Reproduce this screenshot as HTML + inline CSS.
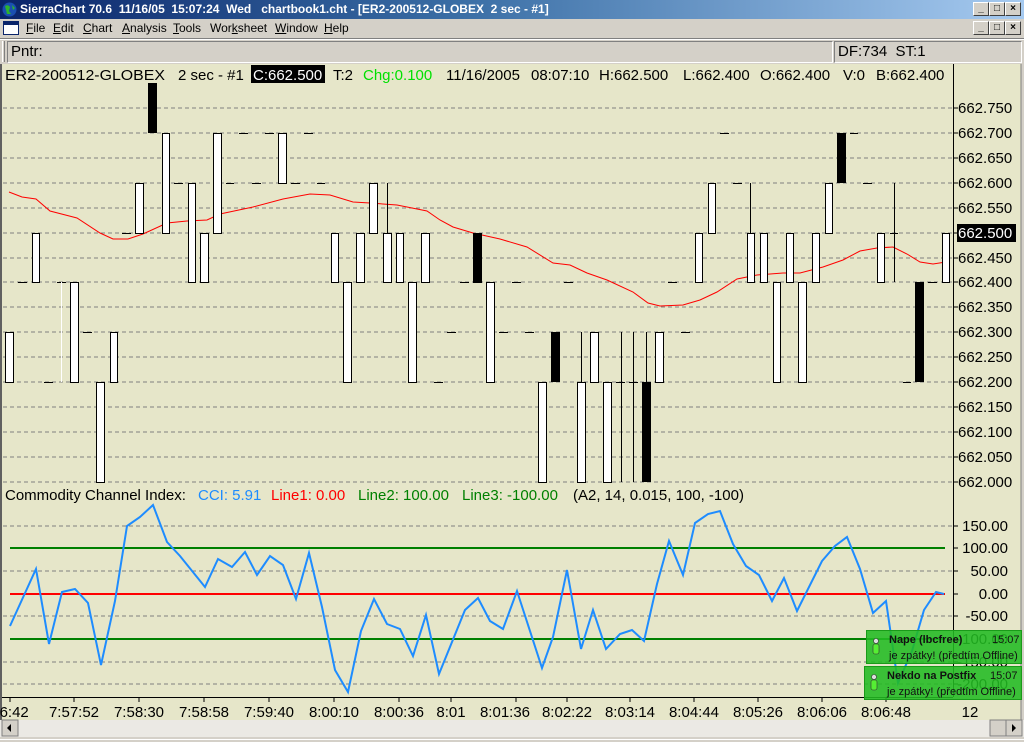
<!DOCTYPE html>
<html><head><meta charset="utf-8"><style>
*{margin:0;padding:0;box-sizing:border-box}
body{width:1024px;height:742px;overflow:hidden;background:#d4d0c8;font-family:"Liberation Sans",sans-serif;position:relative}
.abs{position:absolute}
.title{left:0;top:0;width:1024px;height:19px;background:linear-gradient(90deg,#0a246a 0%,#3a6ea5 45%,#a6caf0 100%);color:#fff;font:bold 12px "Liberation Sans",sans-serif;line-height:19px;padding-left:20px;white-space:pre}
.btn{width:16px;height:14px;background:#d4d0c8;border:1px solid;border-color:#fff #404040 #404040 #fff;font:bold 10px "Liberation Sans",sans-serif;text-align:center;line-height:12px;color:#000}
.menu{left:0;top:19px;width:1024px;height:19px;font-size:12px;line-height:18px}
.menu span{position:absolute;top:0}
.box{border:1px solid;border-color:#808080 #fff #fff #808080;font-size:15px;line-height:20px;padding-left:3px;color:#000}
svg text{white-space:pre}
</style></head><body>
<div class="abs title">SierraChart 70.6  11/16/05  15:07:24  Wed   chartbook1.cht - [ER2-200512-GLOBEX  2 sec - #1]</div>
<svg class="abs" style="left:2px;top:2px" width="15" height="15"><circle cx="7.5" cy="7.5" r="7" fill="#1a4fb0"/><path d="M3 4 Q6 2 8 5 L7 9 L9 12 L5 12 L4 8Z M10 3 L13 6 L11 8Z" fill="#2db32d"/></svg>
<div class="abs btn" style="left:973px;top:2px">_</div><div class="abs btn" style="left:989px;top:2px">&#9633;</div><div class="abs btn" style="left:1005px;top:2px">×</div>
<div class="abs menu"><svg style="position:absolute;left:3px;top:2px" width="16" height="14"><rect x="0.5" y="0.5" width="15" height="13" fill="#fff" stroke="#0a246a"/><rect x="1" y="1" width="14" height="3" fill="#0a246a"/></svg>
<span style="left:26px"><u>F</u>ile</span><span style="left:53px"><u>E</u>dit</span><span style="left:83px"><u>C</u>hart</span><span style="left:122px"><u>A</u>nalysis</span><span style="left:173px"><u>T</u>ools</span><span style="left:210px">Wor<u>k</u>sheet</span><span style="left:275px"><u>W</u>indow</span><span style="left:324px"><u>H</u>elp</span></div>
<div class="abs btn" style="left:973px;top:21px">_</div><div class="abs btn" style="left:989px;top:21px">&#9633;</div><div class="abs btn" style="left:1005px;top:21px">×</div>
<div class="abs" style="left:0;top:38px;width:1024px;height:1px;background:#808080"></div>
<div class="abs" style="left:0;top:39px;width:1024px;height:1px;background:#fff"></div>
<div class="abs" style="left:2px;top:41px;width:3px;height:21px;border-left:1px solid #fff;border-right:1px solid #808080"></div>
<div class="abs box" style="left:7px;top:41px;width:826px;height:22px">Pntr:</div>
<div class="abs box" style="left:834px;top:41px;width:188px;height:22px">DF:734&nbsp; ST:1</div>
<svg class="abs" style="left:0;top:64px" width="1024" height="678" viewBox="0 64 1024 678" font-family="Liberation Sans, sans-serif">
<rect x="0" y="64" width="1024" height="656" fill="#e6e6c9"/>
<rect x="0" y="64" width="2" height="656" fill="#606060"/>
<rect x="1021" y="64" width="3" height="656" fill="#d4d0c8"/>
<line x1="1021" y1="64" x2="1021" y2="720" stroke="#808080"/>
<g stroke="#808080" stroke-dasharray="4,3">
<path d="M3 108H953M3 133H953M3 158H953M3 183H953M3 208H953M3 233H953M3 258H953M3 282H953M3 307H953M3 332H953M3 357H953M3 382H953M3 407H953M3 432H953M3 457H953M3 482H953"/>
<path d="M3 526H953M3 571H953M3 616H953M3 662H953M3 684H953"/>
</g>
<line x1="953.5" y1="64" x2="953.5" y2="697" stroke="#000"/>
<line x1="2" y1="697.5" x2="953" y2="697.5" stroke="#000"/>
<g stroke="#000" stroke-width="1">
<path d="M953 108h5M953 133h5M953 158h5M953 183h5M953 208h5M953 233h5M953 258h5M953 282h5M953 307h5M953 332h5M953 357h5M953 382h5M953 407h5M953 432h5M953 457h5M953 482h5M953 526h5M953 548h5M953 571h5M953 594h5M953 616h5M953 639h5M953 662h5M953 684h5"/>
<path d="M10 697v5M74 697v5M139 697v5M204 697v5M269 697v5M334 697v5M399 697v5M451 697v5M516 697v5M567 697v5M630 697v5M694 697v5M758 697v5M822 697v5M886 697v5"/>
</g>
<g fill="#000" font-size="15">
<text x="958" y="113">662.750</text><text x="958" y="138">662.700</text><text x="958" y="163">662.650</text><text x="958" y="188">662.600</text><text x="958" y="213">662.550</text>
<rect x="957" y="224" width="59" height="18" fill="#000"/><text x="958" y="238" fill="#fff">662.500</text>
<text x="958" y="263">662.450</text><text x="958" y="287">662.400</text><text x="958" y="312">662.350</text><text x="958" y="337">662.300</text><text x="958" y="362">662.250</text><text x="958" y="387">662.200</text><text x="958" y="412">662.150</text><text x="958" y="437">662.100</text><text x="958" y="462">662.050</text><text x="958" y="487">662.000</text>
<g text-anchor="end"><text x="1008" y="531">150.00</text><text x="1008" y="553">100.00</text><text x="1008" y="576">50.00</text><text x="1008" y="599">0.00</text><text x="1008" y="621">-50.00</text><text x="1008" y="644">-100.00</text><text x="1008" y="667">-150.00</text><text x="1008" y="689">-200.00</text></g>
</g>
<g font-size="15" fill="#000">
<text x="5" y="80" textLength="160" lengthAdjust="spacingAndGlyphs">ER2-200512-GLOBEX</text><text x="178" y="80">2 sec - #1</text>
<rect x="251" y="65" width="74" height="18" fill="#000"/><text x="253" y="80" fill="#fff">C:662.500</text>
<text x="333" y="80">T:2</text><text x="363" y="80" fill="#00e000">Chg:0.100</text>
<text x="446" y="80">11/16/2005</text><text x="531" y="80">08:07:10</text><text x="599" y="80">H:662.500</text><text x="683" y="80">L:662.400</text><text x="760" y="80">O:662.400</text><text x="843" y="80">V:0</text><text x="876" y="80">B:662.400</text>
<text x="5" y="500">Commodity Channel Index:</text><text x="198" y="500" fill="#1e8cff">CCI: 5.91</text><text x="271" y="500" fill="#ff0000">Line1: 0.00</text><text x="358" y="500" fill="#008000">Line2: 100.00</text><text x="462" y="500" fill="#008000">Line3: -100.00</text><text x="573" y="500">(A2, 14, 0.015, 100, -100)</text>
</g>
<g font-size="15" fill="#000" text-anchor="middle">
<text x="10" y="717">56:42</text><text x="74" y="717">7:57:52</text><text x="139" y="717">7:58:30</text><text x="204" y="717">7:58:58</text><text x="269" y="717">7:59:40</text><text x="334" y="717">8:00:10</text><text x="399" y="717">8:00:36</text><text x="451" y="717">8:01</text><text x="505" y="717">8:01:36</text><text x="567" y="717">8:02:22</text><text x="630" y="717">8:03:14</text><text x="694" y="717">8:04:44</text><text x="758" y="717">8:05:26</text><text x="822" y="717">8:06:06</text><text x="886" y="717">8:06:48</text><text x="970" y="717">12</text>
</g>
<polyline fill="none" stroke="#ff0000" stroke-width="1" points="9,192 22,197 36,199 50,211 77,218 100,233 113,239 128,239 143,234 167,223 187,221 207,220 220,214 253,207 283,199 310,194 330,195 353,202 370,203 397,205 427,211 440,220 453,227 473,233 500,239 527,247 553,263 570,265 587,273 607,280 633,292 648,303 660,306 683,305 700,300 717,292 737,279 757,275 783,273 800,273 823,267 843,260 860,251 877,248 893,247 907,254 920,262 933,264 946,262"/>
<g stroke="#000" stroke-width="1">
<path d="M18 282.5h9M44 382.5h9M57 282.5h9M83 332.5h9M122 233.5h9M174 183.5h9M226 183.5h8M239 133.5h9M252 183.5h9M265 133.5h9M291 183.5h9M304 133.5h9M317 183.5h8M434 382.5h9M447 332.5h9M460 282.5h9M499 332.5h9M512 282.5h9M525 332.5h9M564 282.5h9M668 282.5h9M681 332.5h9M720 133.5h9M733 183.5h9M850 133.5h8M863 183.5h9M903 382.5h8M928 282.5h9M890 233.5h8M616 382.5h9M629 382.5h9"/>
<path d="M387.5 183v50M581.5 332v50M621.5 332v150M633.5 332v150M646.5 332v50M750.5 183v50M894.5 183v99"/>
</g>
<line x1="61.5" y1="282" x2="61.5" y2="382" stroke="#fff"/>
<g fill="#fff" stroke="#000" stroke-width="1">
<rect x="5.5" y="332.5" width="8" height="50"/><rect x="32.5" y="233.5" width="7" height="49"/><rect x="70.5" y="282.5" width="8" height="100"/><rect x="96.5" y="382.5" width="8" height="100"/><rect x="110.5" y="332.5" width="7" height="50"/><rect x="135.5" y="183.5" width="8" height="50"/><rect x="162.5" y="133.5" width="7" height="100"/><rect x="188.5" y="183.5" width="7" height="99"/><rect x="200.5" y="233.5" width="8" height="49"/><rect x="213.5" y="133.5" width="8" height="100"/><rect x="278.5" y="133.5" width="8" height="50"/>
<rect x="331.5" y="233.5" width="7" height="49"/><rect x="343.5" y="282.5" width="8" height="100"/><rect x="356.5" y="233.5" width="8" height="49"/><rect x="369.5" y="183.5" width="8" height="50"/><rect x="383.5" y="233.5" width="8" height="49"/><rect x="396.5" y="233.5" width="7" height="49"/><rect x="408.5" y="282.5" width="8" height="100"/><rect x="421.5" y="233.5" width="8" height="49"/><rect x="486.5" y="282.5" width="8" height="100"/><rect x="538.5" y="382.5" width="8" height="100"/><rect x="577.5" y="382.5" width="8" height="100"/><rect x="590.5" y="332.5" width="8" height="50"/><rect x="603.5" y="382.5" width="8" height="100"/><rect x="655.5" y="332.5" width="8" height="50"/>
<rect x="695.5" y="233.5" width="7" height="49"/><rect x="708.5" y="183.5" width="7" height="50"/><rect x="747.5" y="233.5" width="7" height="49"/><rect x="760.5" y="233.5" width="7" height="49"/><rect x="773.5" y="282.5" width="7" height="100"/><rect x="786.5" y="233.5" width="7" height="49"/><rect x="798.5" y="282.5" width="8" height="100"/><rect x="812.5" y="233.5" width="7" height="49"/><rect x="825.5" y="183.5" width="7" height="50"/><rect x="877.5" y="233.5" width="7" height="49"/><rect x="942.5" y="233.5" width="7" height="49"/>
</g>
<g fill="#000">
<rect x="148" y="83" width="9" height="50"/><rect x="473" y="233" width="9" height="50"/><rect x="551" y="332" width="9" height="50"/><rect x="642" y="382" width="9" height="100"/><rect x="837" y="133" width="9" height="50"/><rect x="915" y="282" width="9" height="100"/>
</g>
<path d="M10 548H945M10 639H945" stroke="#008000" stroke-width="2"/>
<path d="M10 594H945" stroke="#ff0000" stroke-width="2"/>
<polyline fill="none" stroke="#1e8cff" stroke-width="2" points="10,626 36,569 49,644 62,592 75,589 88,603 101,665 115,601 127,526 140,517 153,505 167,542 180,556 205,587 218,559 232,567 245,552 257,575 270,556 283,565 296,599 309,553 322,607 335,670 348,692 361,631 374,599 387,624 400,629 413,656 426,615 439,674 465,610 478,598 490,621 503,629 517,591 542,668 553,637 567,570 581,649 593,610 606,649 620,634 632,630 644,641 657,584 669,541 683,575 695,523 708,514 720,511 733,544 746,566 759,575 772,601 784,578 797,611 822,561 835,546 847,537 860,569 873,613 886,601 898,683 912,651 924,610 936,592 944,594"/>
<g>
<rect x="866.5" y="630.5" width="155" height="33" fill="#22bb22" fill-opacity="0.88" stroke="#1a9a1a"/>
<rect x="864.5" y="666.5" width="157" height="33" fill="#22bb22" fill-opacity="0.88" stroke="#1a9a1a"/>
<g fill="#111" font-size="11"><text x="889" y="643" font-weight="bold">Nape (lbcfree)</text><text x="992" y="643">15:07</text><text x="889" y="659">je zpátky! (předtím Offline)</text>
<text x="887" y="679" font-weight="bold">Nekdo na Postfix</text><text x="990" y="679">15:07</text><text x="887" y="695">je zpátky! (předtím Offline)</text></g>
<g><circle cx="876" cy="641" r="2.5" fill="#ddd" stroke="#333" stroke-width=".6"/><rect x="873" y="644" width="6" height="10" rx="2" fill="#55ee33" stroke="#333" stroke-width=".6"/>
<circle cx="874" cy="677" r="2.5" fill="#ddd" stroke="#333" stroke-width=".6"/><rect x="871" y="680" width="6" height="10" rx="2" fill="#55ee33" stroke="#333" stroke-width=".6"/></g>
</g>
<rect x="0" y="720" width="1024" height="17" fill="#ebe9e4"/>
<rect x="2" y="720" width="16" height="16" fill="#d4d0c8" stroke="#808080"/><path d="M11 724v8l-4-4z" fill="#000"/>
<rect x="990" y="720" width="16" height="16" fill="#d4d0c8" stroke="#808080"/>
<rect x="1006" y="720" width="16" height="16" fill="#d4d0c8" stroke="#808080"/><path d="M1012 724v8l4-4z" fill="#000"/>
<rect x="0" y="737" width="1024" height="5" fill="#d4d0c8"/><line x1="0" y1="739.5" x2="1024" y2="739.5" stroke="#fff"/>
</svg>
</body></html>
